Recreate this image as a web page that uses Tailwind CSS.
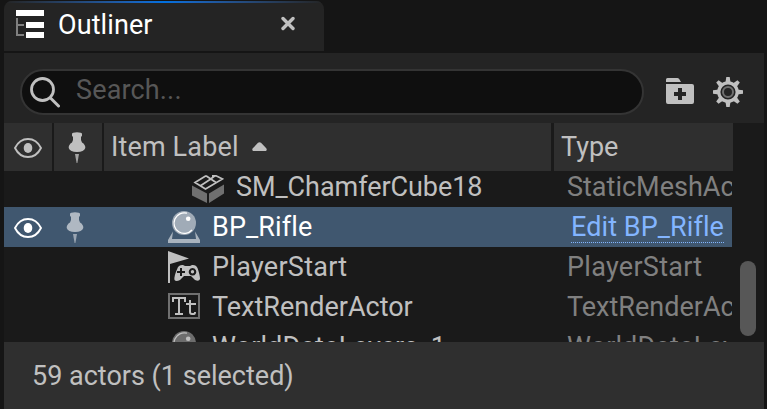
<!DOCTYPE html>
<html lang="en">
<head>
<meta charset="utf-8">
<title>Outliner</title>
<script src="https://cdn.jsdelivr.net/npm/@tailwindcss/browser@4"></script>
</head>
<body class="bg-[#151515] overflow-hidden">
<svg class="hidden">
  <symbol id="eye" viewBox="0 0 28 20"><path d="M1 10C7-2 21-2 27 10C21 22 7 22 1 10Z" fill="none" stroke="currentColor" stroke-width="1.9"/><ellipse cx="14" cy="10" rx="4.3" ry="5" fill="currentColor"/></symbol>
  <symbol id="pin" viewBox="0 0 18 32"><path d="M4 1.800Q4 .2 9 .2T14 1.800Q14.500 4 13 5Q12.500 9 14 10.500Q17.500 12.500 17.300 16Q16 20 9 20T.700 16Q.500 12.500 4 10.500Q5.500 9 5 5Q3.500 4 4 1.800Z" fill="currentColor"/><path d="M7 22H11L9.400 31H8.600Z" fill="currentColor" opacity=".8"/></symbol>
  <symbol id="orb" viewBox="0 0 32 32"><path d="M5 20.500L4 28H28L27 20.500L32 29V32H0V29Z" fill="currentColor" opacity=".55"/><circle cx="16" cy="12" r="12" fill="currentColor" opacity=".5"/><path d="M24 19A10.300 10.300 0 1 1 19 2.200" fill="none" stroke="currentColor" stroke-width="1.300"/><circle cx="20.200" cy="7.800" r="2.300" fill="currentColor"/></symbol>
</svg>
<main class="w-[767px] h-[409px] pl-1 pr-[3px] pt-px flex flex-col font-[Roboto,sans-serif] text-[27px] leading-[40px] whitespace-nowrap text-[#c0c0c0]">
  <header class="w-80 h-[50px] shrink-0 rounded-t-lg overflow-hidden bg-[#242424] flex flex-col">
    <div class="h-0.5 shrink-0 bg-linear-to-r from-[#242424] via-[#0070e0] to-[#242424]"></div>
    <div class="flex h-12 pl-3 pr-[29px]">
      <svg class="mt-[7px] w-7 h-7 shrink-0" viewBox="0 0 28 28"><path d="M0 0H28V6H0ZM10 12H28V18H10ZM10 22H28V28H10Z" fill="#fff"/><path d="M1 8V25H8M1 15H8" fill="none" stroke="#808080" stroke-width="2"/></svg>
      <h1 class="ml-[14px] mt-[2px] text-white tracking-[0.1px]">Outliner</h1>
      <svg class="ml-auto mt-[13px] w-[14px] h-[15px]" viewBox="0 0 14 15"><path d="M2 2.500L12 12.500M12 2.500L2 12.500" stroke="#c0c0c0" stroke-width="3.400" stroke-linecap="round"/></svg>
    </div>
  </header>
  <section class="mt-0.5 h-[70px] shrink-0 bg-[#242424] pl-4 flex items-start">
    <div class="mt-4 w-[624px] h-[46px] rounded-full border-2 border-[#343434] bg-[#0f0f0f] flex">
      <svg class="ml-2 mt-1.5 w-[30px] h-[31px]" viewBox="0 0 30 31"><circle cx="12.500" cy="12.500" r="11" fill="none" stroke="#c0c0c0" stroke-width="2.800"/><path d="M20.500 21L28.500 29" stroke="#c0c0c0" stroke-width="3" stroke-linecap="round"/></svg>
      <span class="ml-4 -mt-px text-[#575757] tracking-[0.15px]">Search...</span>
    </div>
    <svg class="ml-[22px] mt-[25px] w-7 h-[26px]" viewBox="0 0 28 26"><path d="M0 4V1.500Q0 0 1.500 0H11.500Q13 0 13.500 1.500L15 4Z" fill="#c0c0c0"/><path fill-rule="evenodd" d="M0 6H26Q28 6 28 8V24Q28 26 26 26H2Q0 26 0 24ZM12 10V14H8V18H12V22H16V18H20V14H16V10Z" fill="#c0c0c0"/></svg>
    <svg class="ml-[19px] mt-6 w-[30px] h-[30px]" viewBox="-15 -15 30 30"><circle r="9.200" fill="none" stroke="#c0c0c0" stroke-width="3.200"/><circle r="5" fill="none" stroke="#707070" stroke-width="2"/><g fill="#c0c0c0"><path id="tooth" d="M-2.600-9L-1.700-15H1.700L2.600-9Z"/><use href="#tooth" transform="rotate(45)"/><use href="#tooth" transform="rotate(90)"/><use href="#tooth" transform="rotate(135)"/><use href="#tooth" transform="rotate(180)"/><use href="#tooth" transform="rotate(225)"/><use href="#tooth" transform="rotate(270)"/><use href="#tooth" transform="rotate(315)"/></g></svg>
  </section>
  <section class="h-[219px] shrink-0 flex bg-[#1a1a1a]">
    <div class="w-[729px] shrink-0 flex flex-col">
      <div class="h-12 shrink-0 flex gap-0.5">
        <div class="w-12 bg-[#2f2f2f] pl-[10px] pt-[15px]"><svg class="w-7 h-5"><use href="#eye"/></svg></div>
        <div class="w-12 bg-[#2f2f2f] pl-[14px] pt-[9px]"><svg class="w-[18px] h-8"><use href="#pin"/></svg></div>
        <div class="w-[447px] bg-[#2f2f2f] pl-[7px] pt-1 flex"><span class="tracking-[0.15px]">Item Label</span><svg class="ml-[13px] mt-[15px] w-[15px] h-[9px]" viewBox="0 0 15 9"><path d="M1 9Q-.5 7.500 1 6L6 .8Q7.500-.5 9 .8L14 6Q15.500 7.500 14 9Z" fill="#c0c0c0"/></svg></div>
        <div class="ml-px flex-1 bg-[#2f2f2f] pl-[7px] pt-1">Type</div>
      </div>
      <div class="h-[171px] w-[728px] overflow-hidden">
        <div class="-mt-1 h-10 flex"><div class="w-[563px] shrink-0 pl-[188px] flex"><svg class="mt-2 w-8 h-7" viewBox="0 0 32 28"><path d="M0 10.500L15 18.500V28L0 20.500ZM17 18.500L32 9.500V18.500L17 28Z" fill="#707070"/><path d="M14 .8L3 7.500L13.500 14L30.500 4L24 .8H20M14 .8L24 7.500M8.500 10.800L18 4.500L23 .8" fill="none" stroke="#c0c0c0" stroke-width="1.700"/></svg><span class="ml-3 tracking-[-0.06px]">SM_ChamferCube18</span></div><span class="shrink-0 text-[#808080]">StaticMeshActor</span></div>
        <div class="h-10 flex bg-[#40576f] text-white"><div class="w-[567px] shrink-0 flex"><svg class="ml-[10px] mt-[11px] w-7 h-5"><use href="#eye"/></svg><svg class="ml-6 mt-[5px] w-[18px] h-8 text-[#afb8c2]"><use href="#pin"/></svg><svg class="ml-[84px] mt-1 w-8 h-8 text-white"><use href="#orb"/></svg><span class="ml-3 tracking-[0.1px]">BP_Rifle</span></div><a class="h-9 shrink-0 text-[#83b5ff] border-b border-dotted border-[#83b5ff] tracking-[0.08px]">Edit BP_Rifle</a></div>
        <div class="h-10 flex"><div class="w-[563px] shrink-0 pl-[164px] flex"><svg class="mt-1 w-8 h-8" viewBox="0 0 32 32"><path d="M0 0L21 7.500L2 13V32H0Z" fill="#c0c0c0"/><path fill-rule="evenodd" d="M10 16Q12 13.500 15 14L17 15H22L24 14Q28 13.500 29.500 17Q32 24 32 28Q31 31 27 29L23 25H16L12 29Q8 31 6.500 29Q5.500 26 10 16ZM12 17V20H9V22H12V25H14V22H17V20H14V17ZM24.500 17A3.800 3.800 0 1 0 24.501 17Z" fill="#c0c0c0"/><circle cx="24.500" cy="20.800" r="1.700" fill="#c0c0c0"/></svg><span class="ml-3 tracking-[0.28px]">PlayerStart</span></div><span class="shrink-0 text-[#808080] tracking-[0.28px]">PlayerStart</span></div>
        <div class="h-10 flex"><div class="w-[563px] shrink-0 pl-[164px] flex"><svg class="mt-[6px] w-8 h-[26px]" viewBox="0 0 32 26"><rect x="1" y="1" width="30" height="24" fill="none" stroke="#707070" stroke-width="2"/><path d="M5 9V5H17V9M11 5V21M7 21H15M22 7V19Q22 21 24 21H26Q27 21 27 19M18 11H28" fill="none" stroke="#c0c0c0" stroke-width="2"/></svg><span class="ml-3">TextRenderActor</span></div><span class="shrink-0 text-[#808080]">TextRenderActor</span></div>
        <div class="h-10 flex"><div class="w-[563px] shrink-0 pl-[164px] flex"><svg class="mt-1 w-8 h-8 text-[#c0c0c0]"><use href="#orb"/></svg><span class="ml-3 tracking-[0.1px]">WorldDataLayers_1</span></div><span class="shrink-0 text-[#808080] tracking-[0.1px]">WorldDataLayers</span></div>
      </div>
    </div>
    <div class="ml-[7px] mt-[138px] w-4 h-[75px] rounded-full bg-[#575757]"></div>
  </section>
  <footer class="flex-1 bg-[#2f2f2f] pl-7 pt-[14px]">59 actors (1 selected)</footer>
</main>
</body>
</html>
